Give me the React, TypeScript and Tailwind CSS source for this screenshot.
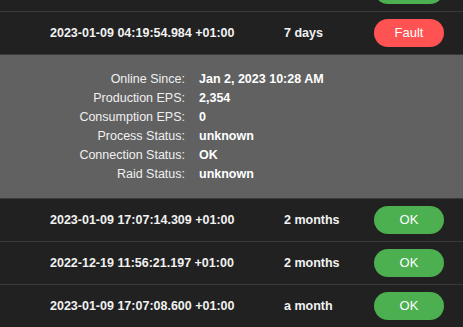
import React from "react";

type Row = { time: string; age: string; status: "OK" | "Fault" };

const rows: Row[] = [
  { time: "2023-01-09 17:07:14.309 +01:00", age: "2 months", status: "OK" },
  { time: "2022-12-19 11:56:21.197 +01:00", age: "2 months", status: "OK" },
  { time: "2023-01-09 17:07:08.600 +01:00", age: "a month", status: "OK" },
];

const details: [string, string][] = [
  ["Online Since:", "Jan 2, 2023 10:28 AM"],
  ["Production EPS:", "2,354"],
  ["Consumption EPS:", "0"],
  ["Process Status:", "unknown"],
  ["Connection Status:", "OK"],
  ["Raid Status:", "unknown"],
];

function StatusPill({ status }: { status: Row["status"] }) {
  const color = status === "OK" ? "bg-[#4caf50]" : "bg-[#ff5252]";
  return (
    <div
      className={`flex h-[28px] w-[70px] items-center justify-center rounded-full text-[13px] text-white ${color}`}
    >
      {status}
    </div>
  );
}

function TableRow({ row, className = "" }: { row: Row; className?: string }) {
  return (
    <div className={`flex h-[43px] items-center border-b border-[#3a3a3a] ${className}`}>
      <div className="w-[284px] shrink-0 whitespace-nowrap pl-[50px] text-[12.5px] font-bold text-[#f2f2f2]">
        {row.time}
      </div>
      <div className="w-[90px] shrink-0 whitespace-nowrap text-[12.5px] font-bold text-[#f2f2f2]">
        {row.age}
      </div>
      <StatusPill status={row.status} />
    </div>
  );
}

export default function App() {
  return (
    <div
      className="h-[327px] w-[463px] overflow-hidden bg-[#212121]"
      style={{ fontFamily: '"Liberation Sans", Arial, sans-serif' }}
    >
      {/* row scrolled mostly out of view: only the pill's lower edge shows */}
      <div className="-mt-[31px] flex h-[43px] items-center border-b border-[#3a3a3a] pl-[374px]">
        <div className="h-[28px] w-[70px] rounded-full bg-[#4caf50]" />
      </div>
      <TableRow row={{ time: "2023-01-09 04:19:54.984 +01:00", age: "7 days", status: "Fault" }} />

      {/* expanded details */}
      <div className="border-b border-[#3a3a3a] bg-[#616161] pt-[15px] pb-[14px]">
        {details.map(([label, value]) => (
          <div key={label} className="flex h-[19px] items-center">
            <div className="w-[185px] text-right text-[12.5px] text-[#f0f0f0]">{label}</div>
            <div className="pl-[14px] text-[12.5px] font-bold text-white">{value}</div>
          </div>
        ))}
      </div>

      {rows.map((r, i) => (
        <TableRow key={i} row={r} />
      ))}
    </div>
  );
}
